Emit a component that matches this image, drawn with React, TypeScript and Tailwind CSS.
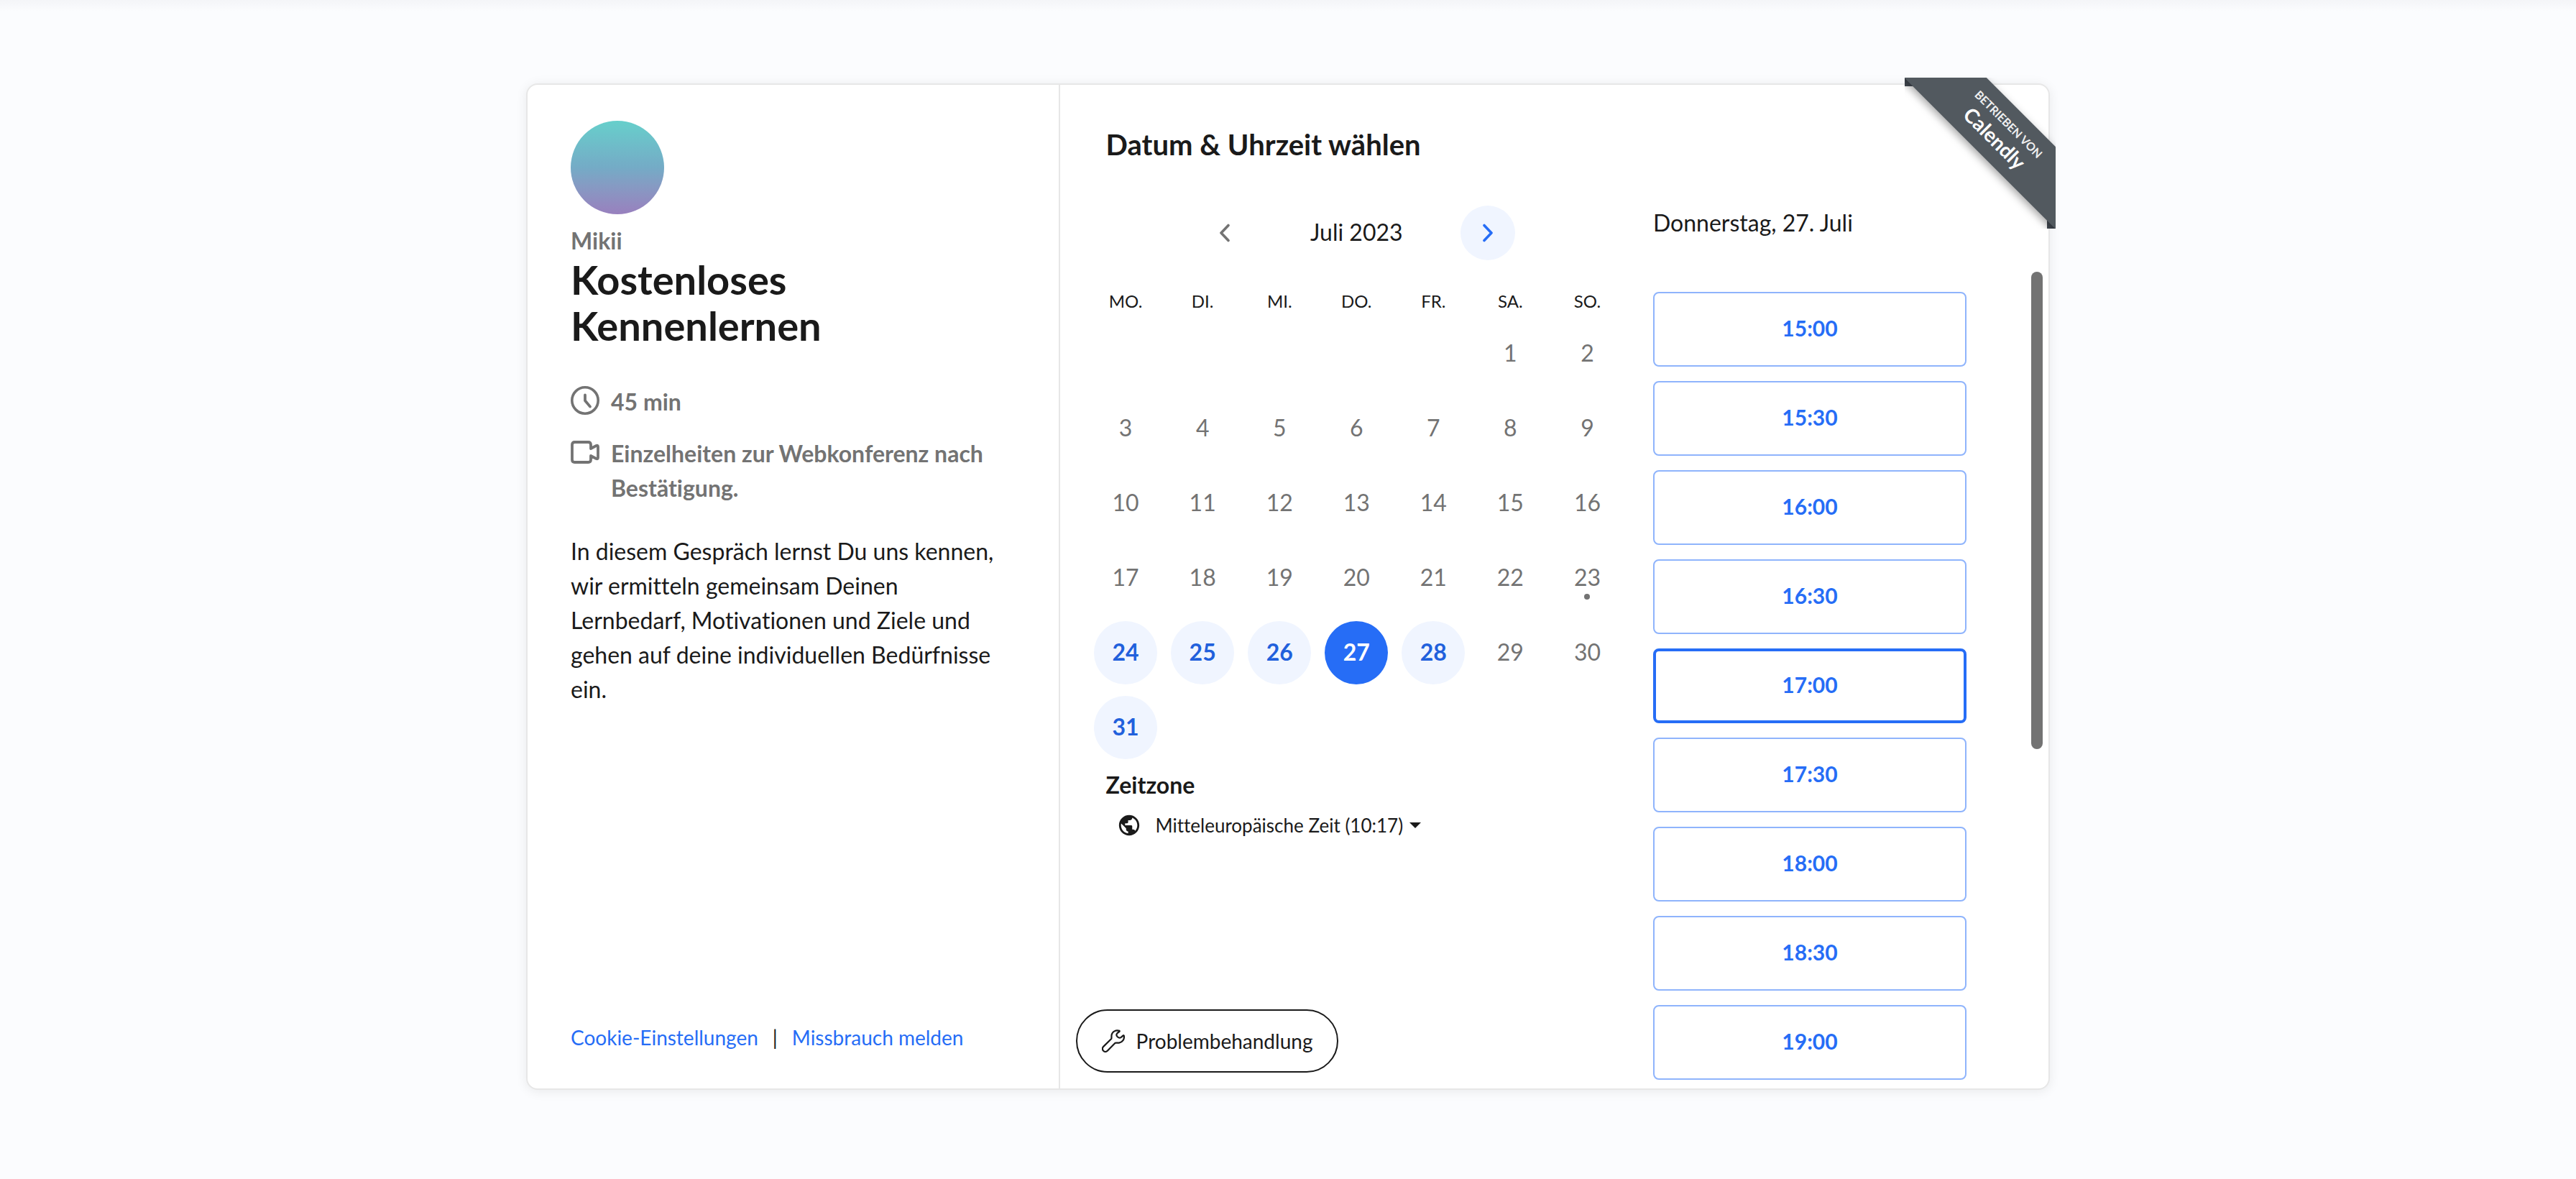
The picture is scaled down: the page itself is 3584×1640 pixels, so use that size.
import { useState } from 'react';
import { MdPublic } from 'react-icons/md';

const WEEKDAYS = ['MO.', 'DI.', 'MI.', 'DO.', 'FR.', 'SA.', 'SO.'];
const WEEKS: (number | null)[][] = [
  [null, null, null, null, null, 1, 2],
  [3, 4, 5, 6, 7, 8, 9],
  [10, 11, 12, 13, 14, 15, 16],
  [17, 18, 19, 20, 21, 22, 23],
  [24, 25, 26, 27, 28, 29, 30],
  [31, null, null, null, null, null, null],
];
const AVAILABLE = [24, 25, 26, 27, 28, 31];
const TODAY = 23;
const SLOTS = ['15:00', '15:30', '16:00', '16:30', '17:00', '17:30', '18:00', '18:30', '19:00'];

function ClockIcon() {
  return (
    <svg className="h-10 w-10 shrink-0" viewBox="0 0 40 40" fill="none" stroke="currentColor" strokeLinecap="round" strokeLinejoin="round" aria-hidden="true">
      <circle cx="20" cy="20" r="18.2" strokeWidth="3.6" />
      <path d="M20 12.5V20.2L27 28.6" strokeWidth="3.8" />
    </svg>
  );
}

function CameraIcon() {
  return (
    <svg className="h-8 w-10 shrink-0" viewBox="0 0 40 32" fill="none" stroke="currentColor" strokeWidth="3.8" strokeLinecap="round" strokeLinejoin="round" aria-hidden="true">
      <path d="M28 11V5.5Q28 2 24.5 2H5.5Q2 2 2 5.5V26.5Q2 30 5.5 30H24.5Q28 30 28 26.5V21L35.5 25Q38 26 38 23.5V8.5Q38 6 35.5 7Z" />
    </svg>
  );
}

function WrenchIcon() {
  return (
    <svg className="h-8 w-8 shrink-0" viewBox="0 0 32 32" fill="none" stroke="currentColor" strokeWidth="2.2" strokeLinecap="round" strokeLinejoin="round" aria-hidden="true">
      <path d="M24.6 1.9C19.4 .2 14.6 3 13.6 7.6C13.2 9.8 13.8 11.4 13.2 13L2.4 23.6C.6 25.6 .6 28.2 2.2 29.8C3.8 31.4 6.4 31.4 8 29.6L18.6 18.8C20.2 18.2 21.6 19 24 18.6C28.8 17.8 31.6 13.4 30.8 8.8C30.6 8.1 30.2 8 29.7 8.4L26.8 10.9C25.4 12 23.4 11.8 21.8 10.3C20 8.5 20.2 6.4 21.6 5L24.6 2.8Z" />
    </svg>
  );
}

function Chevron({ d }: { d: string }) {
  return (
    <svg className="h-[26px] w-4" viewBox="0 0 16 26" fill="none" stroke="currentColor" strokeWidth="3.6" strokeLinecap="round" strokeLinejoin="round" aria-hidden="true">
      <path d={d} />
    </svg>
  );
}

function Ribbon() {
  return (
    <a href="#calendly" className="absolute -top-[10px] -right-[10px] block h-[210px] w-[210px] overflow-hidden">
      <span className="absolute top-0 left-0 h-3 w-3 bg-[#444b54]" />
      <span className="absolute right-0 bottom-0 h-3 w-3 bg-[#444b54]" />
      <span className="absolute top-[36px] left-[-27px] flex h-[81px] w-[320px] rotate-45 flex-col items-center justify-center bg-[#52595f] text-white shadow-[0_4px_12px_rgba(0,0,0,0.35)]">
        <span className="text-[16px] leading-[20px] font-bold text-[#efefef]">BETRIEBEN VON</span>
        <span className="text-[28px] leading-[34px] font-bold">Calendly</span>
      </span>
    </a>
  );
}

export default function App() {
  const [day, setDay] = useState(27);
  const [slot, setSlot] = useState('17:00');

  return (
    <div className="min-h-screen bg-[#fbfcfe] font-['Lato','Liberation_Sans',sans-serif] text-[32px] leading-[48px] text-[#1a1a1a] [font-variant-ligatures:none]">
      <div className="h-4 bg-linear-to-b from-[#f4f5f8] to-[#fbfcfe]" />
      <main className="relative mx-auto mt-[100px] flex min-h-[1400px] w-full max-w-[2120px] rounded-2xl border-2 border-[#e7e7e7] bg-white shadow-[0_2px_16px_rgba(0,0,0,0.08)]">
        <aside className="flex w-[35%] shrink-0 flex-col border-r-2 border-[#e7e7e7] px-[60px] pt-[50px] pb-[51px]">
          <div className="h-[130px] w-[130px] rounded-full bg-linear-to-b from-[#66cfcb] via-[#74abc6] to-[#9880be]" />
          <p className="mt-[15px] leading-[44px] font-bold text-[#737373]">Mikii</p>
          <h1 className="text-[56px] leading-[64px] font-bold">Kostenloses Kennenlernen</h1>
          <ul className="mt-[50px] flex flex-col gap-6 font-bold text-[#737373]">
            <li className="flex items-start gap-4">
              <span className="pt-0.5"><ClockIcon /></span>
              45 min
            </li>
            <li className="flex items-start gap-4">
              <span className="pt-1.5"><CameraIcon /></span>
              <span>Einzelheiten zur Webkonferenz nach Bestätigung.</span>
            </li>
          </ul>
          <p className="mt-10">
            In diesem Gespräch lernst Du uns kennen, wir ermitteln gemeinsam Deinen Lernbedarf, Motivationen und Ziele und gehen auf deine individuellen Bedürfnisse ein.
          </p>
          <footer className="mt-auto flex gap-5 text-[28px] leading-[40px]">
            <a href="#cookies" className="text-[#266df6]">Cookie-Einstellungen</a>
            <span>|</span>
            <a href="#missbrauch" className="text-[#266df6]">Missbrauch melden</a>
          </footer>
        </aside>

        <section className="flex min-w-0 flex-1 flex-col pt-[59px] pb-[22px]">
          <h2 className="ml-16 text-[40px] leading-[48px] font-bold">Datum &amp; Uhrzeit wählen</h2>
          <div className="mx-[38px] mt-[61px] flex items-center justify-center">
            <button type="button" aria-label="Vorheriger Monat" className="flex h-[76px] w-[76px] items-center justify-center rounded-full text-[#737373]">
              <Chevron d="M13 2.5L3 13L13 23.5" />
            </button>
            <span className="w-[290px] pb-0.5 text-center">Juli 2023</span>
            <button type="button" aria-label="Nächster Monat" className="flex h-[76px] w-[76px] items-center justify-center rounded-full bg-[#f0f5ff] text-[#266df6]">
              <Chevron d="M3 2.5L13 13L3 23.5" />
            </button>
          </div>
          <div className="px-[38px]">
            <table className="w-full table-fixed border-collapse">
              <thead>
                <tr>
                  {WEEKDAYS.map((d) => (
                    <th key={d} scope="col" className="h-[78px] p-0 pb-[7px] align-bottom text-[24px] leading-[28px] font-normal">
                      {d}
                    </th>
                  ))}
                </tr>
              </thead>
              <tbody>
                {WEEKS.map((week, i) => (
                  <tr key={i}>
                    {week.map((d, j) => (
                      <td key={j} className="h-[104px] p-0">
                        {d !== null && (
                          <button
                            type="button"
                            disabled={!AVAILABLE.includes(d)}
                            onClick={() => setDay(d)}
                            className={
                              'relative mx-auto flex h-[88px] w-[88px] items-center justify-center rounded-full pb-0.5 ' +
                              (d === day
                                ? 'bg-[#266df6] font-bold text-white'
                                : AVAILABLE.includes(d)
                                  ? 'bg-[#f0f5ff] font-bold text-[#2160dc]'
                                  : 'text-[#737373]')
                            }
                          >
                            {d}
                            {d === TODAY && (
                              <span className="absolute bottom-[14px] left-10 h-2 w-2 rounded-full bg-[#737373]" />
                            )}
                          </button>
                        )}
                      </td>
                    ))}
                  </tr>
                ))}
              </tbody>
            </table>
          </div>
          <label htmlFor="timezone" className="mt-1 ml-16 self-start font-bold">Zeitzone</label>
          <div className="mt-3 ml-20 flex items-center text-[26px] leading-[40px]">
            <MdPublic className="-ml-px h-[34px] w-[34px]" aria-hidden="true" />
            <select id="timezone" className="ml-5 appearance-none bg-transparent p-0">
              <option>Mitteleuropäische Zeit (10:17)</option>
            </select>
            <svg className="ml-2 h-2 w-4" viewBox="0 0 16 8" fill="currentColor" aria-hidden="true">
              <path d="M0 0H16L8 8Z" />
            </svg>
          </div>
          <button type="button" className="mt-auto ml-[22px] flex h-[88px] items-center gap-4 self-start rounded-full border-2 border-[#1a1a1a] px-[34px] text-[28px] leading-[40px]">
            <WrenchIcon />
            Problembehandlung
          </button>
        </section>

        <section className="w-[436px] shrink-0 pt-[168px] pb-3">
          <h3>Donnerstag, 27. Juli</h3>
          <div className="mt-[72px] flex flex-col gap-5">
            {SLOTS.map((s) => (
              <button
                key={s}
                type="button"
                onClick={() => setSlot(s)}
                className={
                  'flex h-[104px] items-center justify-center rounded-lg pb-1 text-[30px] font-bold text-[#266df6] ' +
                  (s === slot ? 'border-4 border-[#266df6]' : 'border-2 border-[#8fb4fc]')
                }
              >
                {s}
              </button>
            ))}
          </div>
        </section>
        <div className="flex w-[114px] shrink-0 justify-end pt-[260px] pr-2">
          <div className="h-[664px] w-4 rounded-full bg-[#737373]" />
        </div>
        <Ribbon />
      </main>
      <div className="h-[124px]" />
    </div>
  );
}
